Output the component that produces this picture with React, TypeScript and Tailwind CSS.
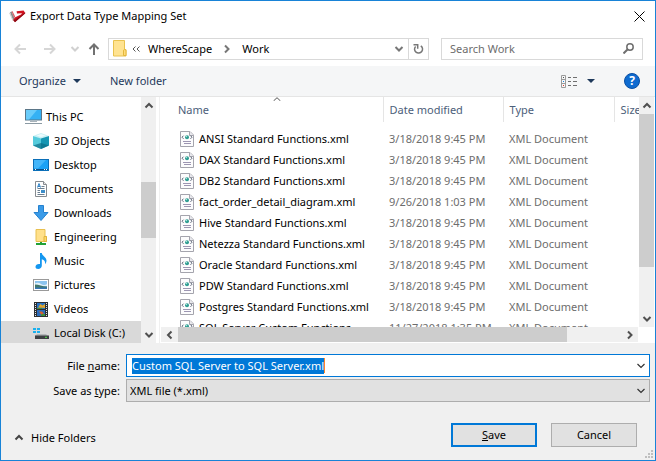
import React, { useEffect, useRef } from "react";

type Row = { name: string; date: string };

const files: Row[] = [
  { name: "ANSI Standard Functions.xml", date: "3/18/2018 9:45 PM" },
  { name: "DAX Standard Functions.xml", date: "3/18/2018 9:45 PM" },
  { name: "DB2 Standard Functions.xml", date: "3/18/2018 9:45 PM" },
  { name: "fact_order_detail_diagram.xml", date: "9/26/2018 1:03 PM" },
  { name: "Hive Standard Functions.xml", date: "3/18/2018 9:45 PM" },
  { name: "Netezza Standard Functions.xml", date: "3/18/2018 9:45 PM" },
  { name: "Oracle Standard Functions.xml", date: "3/18/2018 9:45 PM" },
  { name: "PDW Standard Functions.xml", date: "3/18/2018 9:45 PM" },
  { name: "Postgres Standard Functions.xml", date: "3/18/2018 9:45 PM" },
  { name: "SQL Server Custom Functions", date: "11/27/2018 1:35 PM" },
];

function Chevron({ dir, className, weight = 2 }: { dir: "up" | "down" | "left" | "right"; className?: string; weight?: number }) {
  const paths = {
    up: "M1.5 6.5 5 3l3.5 3.5",
    down: "M1.5 3 5 6.5 8.5 3",
    left: "M6.5 1.5 3 5l3.5 3.5",
    right: "M3 1.5 6.5 5 3 8.5",
  };
  return (
    <svg viewBox="0 0 10 10" className={`size-2.5 shrink-0 ${className ?? ""}`} fill="none" stroke="currentColor" strokeWidth={weight}>
      <path d={paths[dir]} />
    </svg>
  );
}

function Caret() {
  return (
    <svg viewBox="0 0 8 4" className="h-1 w-2 shrink-0" fill="#1e395b">
      <path d="M0 0h8L4 4z" />
    </svg>
  );
}

function AppLogo() {
  return (
    <svg viewBox="0 0 17 13" className="h-[13px] w-[17px] shrink-0">
      <path d="M1 2.2 2.6 1.4 5.4 8 4.2 10.4z" fill="#8b8b8b" />
      <path d="M1 2.2 .4 3.4 3.600 10.8l.6-.4z" fill="#c9c9c9" />
      <path d="M4.2 10 5.800 7.600 12 4.400l1-1.200L8 3.400 7.600 1.200 14.600.400 16.200 3 6 12z" fill="#d1121f" />
      <path d="M4.2 10 6 12.200 16.200 3.600 16.200 2.600 6.200 9.800z" fill="#8e0a14" />
      <path d="m2.600 1.400.8-.4 2.800 5.600-1 1.400z" fill="#d9626a" />
    </svg>
  );
}

function FolderIcon() {
  return (
    <svg viewBox="0 0 14 17" className="h-[17px] w-3.5 shrink-0">
      <path d="M.5.5h11v9H13V16H.5z" fill="#ffe391" stroke="#e9c24f" />
      <path d="M10.5 15.5v-5.3q1.3-1.400 2.500 0v5.300z" fill="#ffdc7a" stroke="#e3b73c" />
    </svg>
  );
}

function PcIcon() {
  return (
    <svg viewBox="0 0 17 16" className="h-4 w-[17px]">
      <rect x=".5" y=".5" width="16" height="10.5" fill="#35b1f4" stroke="#5b7688" />
      <path d="M1 1h11L4 10.5H1z" fill="#6accfa" />
      <path d="M5 12.5h7" stroke="#a9b4bb" />
      <path d="M0 14.5h17" stroke="#8b9aa3" />
    </svg>
  );
}

function CubeIcon() {
  return (
    <svg viewBox="0 0 16 16" className="size-4">
      <path d="M0 3 8 0l8 3-8 3z" fill="#c9f0f5" />
      <path d="M0 3 8 5.5V16L0 12.5z" fill="#55cbdc" />
      <path d="M16 3 8 5.5V16l8-3.5z" fill="#1596b3" />
      <path d="M0 12.5 8 10l8 2.5L8 16z" fill="#0b6c86" opacity=".7" />
      <path d="M3.5 2.5 8 1l4.5 1.5L8 4z" fill="#eefbfd" />
    </svg>
  );
}

function DesktopIcon() {
  return (
    <svg viewBox="0 0 16 12" className="h-3 w-4">
      <rect x=".5" y=".5" width="15" height="11" fill="#1ba1f5" stroke="#0b6fb8" />
      <path d="M1 1h12L5 9.5H1z" fill="#44b6fa" />
      <path d="M1 10.5h14" stroke="#0a4e86" />
      <path d="M2 10.5h1M11 10.5h1M13 10.5h1" stroke="#fff" />
    </svg>
  );
}

function DocumentIcon() {
  return (
    <svg viewBox="0 0 12 16" className="h-4 w-3">
      <path d="M.5.5H8.5l3 3v12H.5z" fill="#fff" stroke="#868b90" />
      <path d="M8.5.5v3h3" fill="#e6e6e6" stroke="#868b90" />
      <path d="m2.5 6.5 1.5-4 1.5 4M3 5.5h2" stroke="#2b7fc4" fill="none" />
      <path d="M6.5 5.5h3M2.5 7.500h7M2.5 13.5h7" stroke="#6b7f90" />
      <path d="M2.5 9.5H5M2.5 11.5H5" stroke="#6b7f90" />
      <path d="M6 9h4v3H6z" fill="#3d8ec9" />
    </svg>
  );
}

function DownloadIcon() {
  return (
    <svg viewBox="0 0 16 16" className="size-4">
      <path d="M5.5.5h5v7H15L8 15.5 1 7.5h4.5z" fill="#3a9be8" stroke="#2581cf" />
    </svg>
  );
}

function NetFolderIcon() {
  return (
    <svg viewBox="0 0 12 16" className="h-4 w-3">
      <path d="M1 .5h9v7h1.5v5H1z" fill="#ffe08a" stroke="#e8c050" />
      <path d="M9 7.5v5h2.5v-5z" fill="#ffd768" stroke="#e0b43d" />
      <path d="M6 13v2M1 15h10" stroke="#22a136" strokeWidth="2" />
    </svg>
  );
}

function MusicIcon() {
  return (
    <svg viewBox="0 0 12 16" className="h-4 w-3">
      <path d="M5 0h1.800c.3 3 4.700 4 4.700 7.500 0 1.500-.6 2.700-1.500 3.700.5-3-1-4.400-3.200-4.900v6.500C6.800 14.800 5.200 16 3.200 16 1.400 16 .5 15 .5 13.700c0-1.800 2-3.200 4.500-2.700z" fill="#1497f0" />
    </svg>
  );
}

function PictureIcon() {
  return (
    <svg viewBox="0 0 16 12" className="h-3 w-4">
      <rect x=".5" y=".5" width="15" height="11" fill="#fff" stroke="#9a9a9a" />
      <path d="M2 2h12v8H2z" fill="#8cc4ee" />
      <path d="M2 4.5q3-1.500 6 .5t6 0V7H2z" fill="#e2f1fa" />
      <path d="M2 5.5c4 0 7 2 12 2V10H2z" fill="#41776b" />
      <path d="M2 8.5h12V10H2z" fill="#3677b5" />
    </svg>
  );
}

function VideoIcon() {
  return (
    <svg viewBox="0 0 14 15" className="h-[15px] w-3.5">
      <path d="M0 0h14v15H0z" fill="#2c2f33" />
      <path d="M1.5 1v14M12.5 1v14" stroke="#e8e8e8" strokeDasharray="1 1" />
      <path d="M3 1h8v6H3z" fill="#2874c4" />
      <path d="M3 8h8v6H3z" fill="#2a6bbb" />
      <path d="M4 5.5 6.5 2l2 1.500L11 2v4z" fill="#e0a42e" />
      <path d="M3 6h5v1H3zM7 12h4v2H7z" fill="#3f8f3c" />
      <path d="M5 9.5h3l2 2-3 1z" fill="#d9622b" />
    </svg>
  );
}

function DiskIcon() {
  return (
    <svg viewBox="0 0 16 13" className="h-[13px] w-4">
      <path d="M0 1h3v2H0zM4 1h3v2H4zM0 4h3v2H0zM4 4h3v2H4z" fill="#19b0ee" />
      <path d="M4 7h9l2 2H2z" fill="#b3b6b8" />
      <path d="M2 8.5h14V12H2z" fill="#3d4043" />
      <path d="M12 10.3h2" stroke="#50e04a" />
    </svg>
  );
}

function XmlIcon() {
  return (
    <svg viewBox="0 0 14 16" className="h-4 w-3.5 shrink-0">
      <path d="M.5.5H10L13.5 4v11.5H.5z" fill="#fcfcfd" stroke="#a4a4ad" />
      <path d="M9.5.5v4h4" fill="#e9e9ee" stroke="#a4a4ad" />
      <path d="M3.500 4.700 2 6.200l1.500 1.600M10.500 4.700 12 6.200l-1.500 1.600" stroke="#5d6678" fill="none" />
      <circle cx="7" cy="6.2" r="2" fill="#2f9d92" />
      <circle cx="6.400" cy="5.500" r=".8" fill="#a7e5d8" />
      <path d="M3 10.5h8M4 12.5h7" stroke="#9d96b2" />
    </svg>
  );
}

const places = [
  { label: "3D Objects", icon: <CubeIcon /> },
  { label: "Desktop", icon: <DesktopIcon /> },
  { label: "Documents", icon: <DocumentIcon /> },
  { label: "Downloads", icon: <DownloadIcon /> },
  { label: "Engineering", icon: <NetFolderIcon /> },
  { label: "Music", icon: <MusicIcon /> },
  { label: "Pictures", icon: <PictureIcon /> },
  { label: "Videos", icon: <VideoIcon /> },
  { label: "Local Disk (C:)", icon: <DiskIcon />, selected: true },
];

function TitleBar() {
  return (
    <header className="flex h-[30px] shrink-0 items-center px-2">
      <AppLogo />
      <h1 className="ml-1 flex-1">Export Data Type Mapping Set</h1>
      <button type="button" aria-label="Close" className="flex size-4 items-center justify-center">
        <svg viewBox="0 0 11 11" className="size-[11px]" stroke="#000" fill="none">
          <path d="m.5.5 10 10M10.5.5l-10 10" />
        </svg>
      </button>
    </header>
  );
}

function NavArrow({ className, d, label }: { className: string; d: string; label: string }) {
  return (
    <button type="button" aria-label={label} className={className}>
      <svg viewBox="0 0 12 12" className="size-3" fill="none" stroke="currentColor" strokeWidth="2">
        <path d={d} />
      </svg>
    </button>
  );
}

function AddressRow() {
  return (
    <nav className="flex h-[35px] shrink-0 items-center pr-3 pl-[13px]">
      <NavArrow label="Back" className="text-[#d6d6d6]" d="M12 6H1.5M6 1.5 1.5 6 6 10.5" />
      <NavArrow label="Forward" className="ml-[18px] text-[#d6d6d6]" d="M0 6h10.5M6 1.5 10.5 6 6 10.5" />
      <button type="button" aria-label="Recent locations" className="ml-3.5 text-[#d0d0d0]">
        <Chevron dir="down" className="size-2" />
      </button>
      <NavArrow label="Up" className="ml-2 text-[#717171]" d="M6 12V1.5M1.5 6 6 1.5 10.5 6" />
      <div className="ml-2 flex h-[22px] min-w-0 flex-1 items-center border border-[#d9d9d9] pl-1">
        <FolderIcon />
        <svg viewBox="0 0 8 6" className="ml-[5px] h-1.5 w-2 shrink-0" fill="none" stroke="#555">
          <path d="M3.5.5 1 3l2.5 2.5M7.5.5 5 3l2.5 2.5" />
        </svg>
        <button type="button" className="ml-2">WhereScape</button>
        <Chevron dir="right" className="ml-2.5 size-2 text-[#777]" />
        <button type="button" className="ml-2.5">Work</button>
        <button type="button" aria-label="Previous locations" className="ml-auto px-1 text-[#777]">
          <Chevron dir="down" />
        </button>
        <button type="button" aria-label="Refresh" className="flex h-full w-5 items-center justify-center border-l border-[#d9d9d9]">
          <svg viewBox="0 0 11 12" className="h-3 w-[11px]" fill="none" stroke="#777" strokeWidth="1.5">
            <path d="M7.8 2.8a4 4 0 1 1-5.200.600" />
            <path d="M.5 1.800h4.200v4" />
          </svg>
        </button>
      </div>
      <div className="ml-3 flex h-[22px] w-[202px] items-center border border-[#d9d9d9] px-2">
        <input type="text" aria-label="Search Work" placeholder="Search Work" className="min-w-0 flex-1 outline-none placeholder:text-[#6d6d6d]" />
        <svg viewBox="0 0 11 11" className="size-[11px] shrink-0" fill="none" stroke="#6f6f6f">
          <circle cx="7" cy="4" r="3.2" strokeWidth="1.5" />
          <path d="M4.5 6.5.5 10.5" strokeWidth="2" />
        </svg>
      </div>
    </nav>
  );
}

function Toolbar() {
  return (
    <div className="flex h-[31px] shrink-0 items-center border-b border-[#e5e5e5] bg-[#f5f6f7] pr-[15px] pl-[18px] text-[#1e395b]">
      <button type="button" className="flex w-[62px] items-center justify-between">
        Organize
        <Caret />
      </button>
      <button type="button" className="ml-[29px]">New folder</button>
      <button type="button" aria-label="Change view" className="ml-auto flex items-center gap-2.5">
        <svg viewBox="0 0 16 13" className="h-[13px] w-4" fill="none">
          <path d="M.5.5h4v12h-4zM.5 4.5h4M.5 8.5h4" stroke="#9a9a9a" />
          <path d="M7 2.5h3M12 2.5h4M7 6.5h3M12 6.5h4M7 10.5h3M12 10.5h4" stroke="#6f6f6f" />
          <path d="M2 2.5h1" stroke="#555" />
          <path d="M2 6.5h1" stroke="#1a86e0" />
          <path d="M2 10.5h1" stroke="#e03a2b" />
        </svg>
        <Caret />
      </button>
      <button type="button" aria-label="Help" className="ml-[29px] flex size-4 items-center justify-center rounded-full border border-[#0a4fa3] bg-[#0f6bd0] text-[12px] font-bold text-white">
        ?
      </button>
    </div>
  );
}

function FolderTree() {
  return (
    <aside className="flex w-[155px] shrink-0">
      <ul className="min-w-0 flex-1 overflow-hidden pt-2">
        <li className="flex h-6 items-center pl-6">
          <PcIcon />
          <span className="ml-1">This PC</span>
        </li>
        {places.map((p) => (
          <li key={p.label} className={p.selected ? "flex h-6 items-center bg-[#d9d9d9] pl-8" : "flex h-6 items-center pl-8"}>
            <span className="flex w-4 shrink-0 justify-center">{p.icon}</span>
            <span className="ml-[5px] whitespace-nowrap">{p.label}</span>
          </li>
        ))}
      </ul>
      <div className="flex w-[15px] shrink-0 flex-col items-center bg-[#f0f0f0] text-[#505050]">
        <div className="flex h-[17px] items-center"><Chevron dir="up" /></div>
        <div className="flex flex-1 flex-col self-stretch">
          <div className="flex-[68]" />
          <div className="flex-[56] bg-[#cdcdcd]" />
          <div className="flex-[88]" />
        </div>
        <div className="flex h-[17px] items-center"><Chevron dir="down" /></div>
      </div>
    </aside>
  );
}

function FileList() {
  return (
    <section className="ml-[3px] flex min-w-0 flex-1 flex-col border-l border-[#f0f0f0]">
      <div className="flex min-h-0 flex-1">
        <div className="min-w-0 flex-1 overflow-hidden">
          <table className="w-full table-fixed border-collapse text-left whitespace-nowrap">
            <colgroup>
              <col />
              <col className="w-[120px]" />
              <col className="w-[111px]" />
              <col className="w-[25px]" />
            </colgroup>
            <thead className="text-[#4c607a]">
              <tr className="h-[25px]">
                <th className="relative border-r border-[#e5e5e5] p-0 pl-[18px] font-normal">
                  Name
                  <span className="absolute inset-x-0 top-0 flex justify-center pl-3">
                    <svg viewBox="0 0 8 4" className="h-1 w-2" fill="none" stroke="#555">
                      <path d="M.5 4 4 .7 7.5 4" />
                    </svg>
                  </span>
                </th>
                <th className="border-r border-[#e5e5e5] p-0 pl-1.5 font-normal">Date modified</th>
                <th className="border-r border-[#e5e5e5] p-0 pl-1.5 font-normal">Type</th>
                <th className="overflow-hidden p-0 pl-1.5 font-normal">Size</th>
              </tr>
            </thead>
            <tbody className="text-[#6d6d6d]">
              <tr aria-hidden="true" className="h-1.5"><td colSpan={4} className="p-0" /></tr>
              {files.map((f) => (
                <tr key={f.name} className="h-[21px]">
                  <td className="overflow-hidden p-0 pl-5 text-black">
                    <span className="flex items-center gap-[5px]">
                      <XmlIcon />
                      {f.name}
                    </span>
                  </td>
                  <td className="p-0 pl-1.5">{f.date}</td>
                  <td className="p-0 pl-1.5">XML Document</td>
                  <td className="p-0" />
                </tr>
              ))}
            </tbody>
          </table>
        </div>
        <div className="mr-px flex w-[15px] shrink-0 flex-col items-center bg-[#f0f0f0] text-[#505050]">
          <div className="flex h-[17px] items-center"><Chevron dir="up" /></div>
          <div className="flex flex-1 flex-col self-stretch">
            <div className="flex-[153] bg-[#cdcdcd]" />
            <div className="flex-[43]" />
          </div>
          <div className="flex h-[17px] items-center"><Chevron dir="down" /></div>
        </div>
      </div>
      <div className="mr-[17px] mb-px ml-px flex h-[15px] shrink-0 items-center bg-[#f0f0f0] text-[#505050]">
        <div className="flex w-[17px] justify-center"><Chevron dir="left" /></div>
        <div className="flex flex-1 self-stretch">
          <div className="flex-[389] bg-[#cdcdcd]" />
          <div className="flex-[54]" />
        </div>
        <div className="flex w-[17px] justify-center"><Chevron dir="right" /></div>
      </div>
    </section>
  );
}

function Grip() {
  return (
    <svg viewBox="0 0 8 8" className="absolute right-0.5 bottom-0.5 size-2" fill="#bfbfbf">
      <path d="M6 0h2v2H6zM3 3h2v2H3zM6 3h2v2H6zM0 6h2v2H0zM3 6h2v2H3zM6 6h2v2H6z" />
    </svg>
  );
}

function Footer() {
  const nameRef = useRef<HTMLInputElement>(null);
  useEffect(() => {
    nameRef.current?.focus();
    nameRef.current?.select();
  }, []);
  return (
    <footer className="relative shrink-0 bg-[#f0f0f0] pt-[11px] pr-[5px] pb-[13px]">
      <div className="grid grid-cols-[119px_1fr] items-center gap-x-1.5 gap-y-0.5">
        <label htmlFor="file-name" className="text-right">
          File <u>n</u>ame:
        </label>
        <div className="flex h-[23px] items-center border border-[#0078d7] bg-white pr-[3px] pl-[5px]">
          <input
            id="file-name"
            ref={nameRef}
            type="text"
            defaultValue="Custom SQL Server to SQL Server.xml"
            className="field-sizing-content outline-none selection:bg-[#0078d7] selection:text-white"
          />
          <span className="h-[15px] w-px bg-[#ff8728]" />
          <button type="button" aria-label="Recent file names" className="ml-auto text-[#333]">
            <Chevron dir="down" weight={1.2} />
          </button>
        </div>
        <label htmlFor="file-type" className="text-right">
          Save as <u>t</u>ype:
        </label>
        <div className="relative">
          <select id="file-type" className="block h-[23px] w-full appearance-none border border-[#adadad] bg-[#e1e1e1] pl-[3px]">
            <option>XML file (*.xml)</option>
          </select>
          <span className="pointer-events-none absolute inset-y-0 right-1 flex items-center text-[#333]">
            <Chevron dir="down" weight={1.2} />
          </span>
        </div>
      </div>
      <div className="mt-[21px] flex items-center gap-3.5 px-[13px]">
        <button type="button" className="mt-1.5 mr-auto flex items-center gap-[7px]">
          <Chevron dir="up" className="text-[#444]" />
          Hide Folders
        </button>
        <button type="button" className="h-6 w-[86px] border-2 border-[#0078d7] bg-[#e1e1e1]">
          <u>S</u>ave
        </button>
        <button type="button" className="h-6 w-[86px] border border-[#adadad] bg-[#e1e1e1]">
          Cancel
        </button>
      </div>
      <Grip />
    </footer>
  );
}

export default function App() {
  return (
    <main className="flex h-screen flex-col overflow-hidden border border-[#1883d7] bg-white font-['Noto_Sans','Open_Sans',sans-serif] text-[11px] leading-4 text-black">
      <TitleBar />
      <AddressRow />
      <Toolbar />
      <div className="flex min-h-0 flex-1">
        <FolderTree />
        <FileList />
      </div>
      <Footer />
    </main>
  );
}
